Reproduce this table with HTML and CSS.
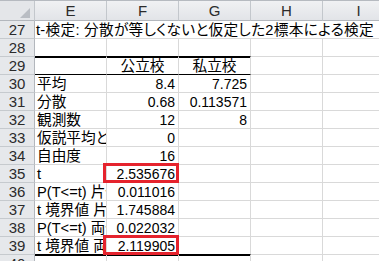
FILE: index.html
```html
<!DOCTYPE html>
<html lang="ja">
<head>
<meta charset="utf-8">
<title>t-検定</title>
<link rel="stylesheet" href="styles.css">
</head>
<body>
<div class="sheet">
  <div class="corner"><svg class="tri" width="10" height="10" viewBox="0 0 10 10"><polygon points="10,0 10,10 0,10" fill="#b9bdc3"/></svg></div>
  <div class="ch">E</div><div class="ch">F</div><div class="ch">G</div><div class="ch">H</div><div class="ch">I</div>

  <div class="rh">27</div>
  <div class="c title">t-検定: 分散が等しくないと仮定した2標本による検定</div>

  <div class="rh">28</div>
  <div class="c bb"></div><div class="c bb"></div><div class="c bb"></div><div class="c"></div><div class="c"></div>

  <div class="rh">29</div>
  <div class="c tt bb"></div><div class="c tt bb ctr">公立校</div><div class="c tt bb ctr">私立校</div><div class="c"></div><div class="c"></div>

  <div class="rh">30</div>
  <div class="c">平均</div><div class="c num">8.4</div><div class="c num">7.725</div><div class="c"></div><div class="c"></div>

  <div class="rh">31</div>
  <div class="c">分散</div><div class="c num">0.68</div><div class="c num">0.113571</div><div class="c"></div><div class="c"></div>

  <div class="rh">32</div>
  <div class="c">観測数</div><div class="c num">12</div><div class="c num">8</div><div class="c"></div><div class="c"></div>

  <div class="rh">33</div>
  <div class="c">仮説平均との差異</div><div class="c num">0</div><div class="c"></div><div class="c"></div><div class="c"></div>

  <div class="rh">34</div>
  <div class="c">自由度</div><div class="c num">16</div><div class="c"></div><div class="c"></div><div class="c"></div>

  <div class="rh">35</div>
  <div class="c">t</div><div class="c num mark">2.535676</div><div class="c"></div><div class="c"></div><div class="c"></div>

  <div class="rh">36</div>
  <div class="c">P(T&lt;=t) 片側</div><div class="c num">0.011016</div><div class="c"></div><div class="c"></div><div class="c"></div>

  <div class="rh">37</div>
  <div class="c">t 境界値 片側</div><div class="c num">1.745884</div><div class="c"></div><div class="c"></div><div class="c"></div>

  <div class="rh">38</div>
  <div class="c">P(T&lt;=t) 両側</div><div class="c num">0.022032</div><div class="c"></div><div class="c"></div><div class="c"></div>

  <div class="rh">39</div>
  <div class="c bb">t 境界値 両側</div><div class="c num bb mark">2.119905</div><div class="c bb"></div><div class="c"></div><div class="c"></div>

  <div class="rh">40</div>
  <div class="c tt"></div><div class="c tt"></div><div class="c tt"></div><div class="c"></div><div class="c"></div>
</div>
</body>
</html>
```
FILE: styles.css
```css
html, body {
  margin: 0;
  padding: 0;
  background: #ffffff;
  overflow: hidden;
}

.sheet {
  display: grid;
  grid-template-columns: 35px repeat(5, 72px);
  grid-template-rows: 20px;
  grid-auto-rows: 18px;
  border-top: 1px solid #b6bac0;
  width: 395px;
  font-family: "Liberation Sans", "Noto Sans CJK JP", sans-serif;
  font-size: 14.67px;
  color: #000;
  font-feature-settings: "palt";
}

.corner {
  background: #e4e6e9;
  border-right: 1px solid #c3c7cc;
  border-bottom: 1px solid #b3b7bd;
  box-sizing: border-box;
  display: flex;
  align-items: flex-end;
  justify-content: flex-end;
  padding: 0 4px 2px 0;
}

.tri {
  display: block;
}

.ch {
  background: linear-gradient(#f0f1f3, #e2e4e8);
  border-right: 1px solid #c3c7cc;
  border-bottom: 1px solid #b3b7bd;
  box-sizing: border-box;
  text-align: center;
  line-height: 19px;
  font-size: 15px;
  color: #2b2b2b;
}

.rh {
  background: #e6e8eb;
  border-right: 1px solid #b3b7bd;
  border-bottom: 1px solid #c6cace;
  box-sizing: border-box;
  text-align: center;
  line-height: 18px;
  font-size: 15px;
  color: #2b2b2b;
}

.c {
  box-sizing: border-box;
  border-right: 1px solid #d9d9d9;
  border-bottom: 1px solid #d9d9d9;
  padding: 0 2px;
  line-height: 18px;
  white-space: nowrap;
  overflow: hidden;
}

.title {
  grid-column: span 5;
  border-right: none;
  overflow: visible;
  padding-left: 1px;
  letter-spacing: 0.28px;
}

.num {
  text-align: right;
  font-size: 14px;
  padding-right: 3px;
}

.ctr {
  text-align: center;
}

.bb {
  border-bottom-color: #000;
}

.tt {
  box-shadow: inset 0 1px 0 #000;
}

.mark {
  position: relative;
  overflow: visible;
}

.mark::after {
  content: "";
  position: absolute;
  top: -2px;
  left: -4px;
  right: -1px;
  bottom: -1px;
  border: 3px solid #e5232d;
}
```
